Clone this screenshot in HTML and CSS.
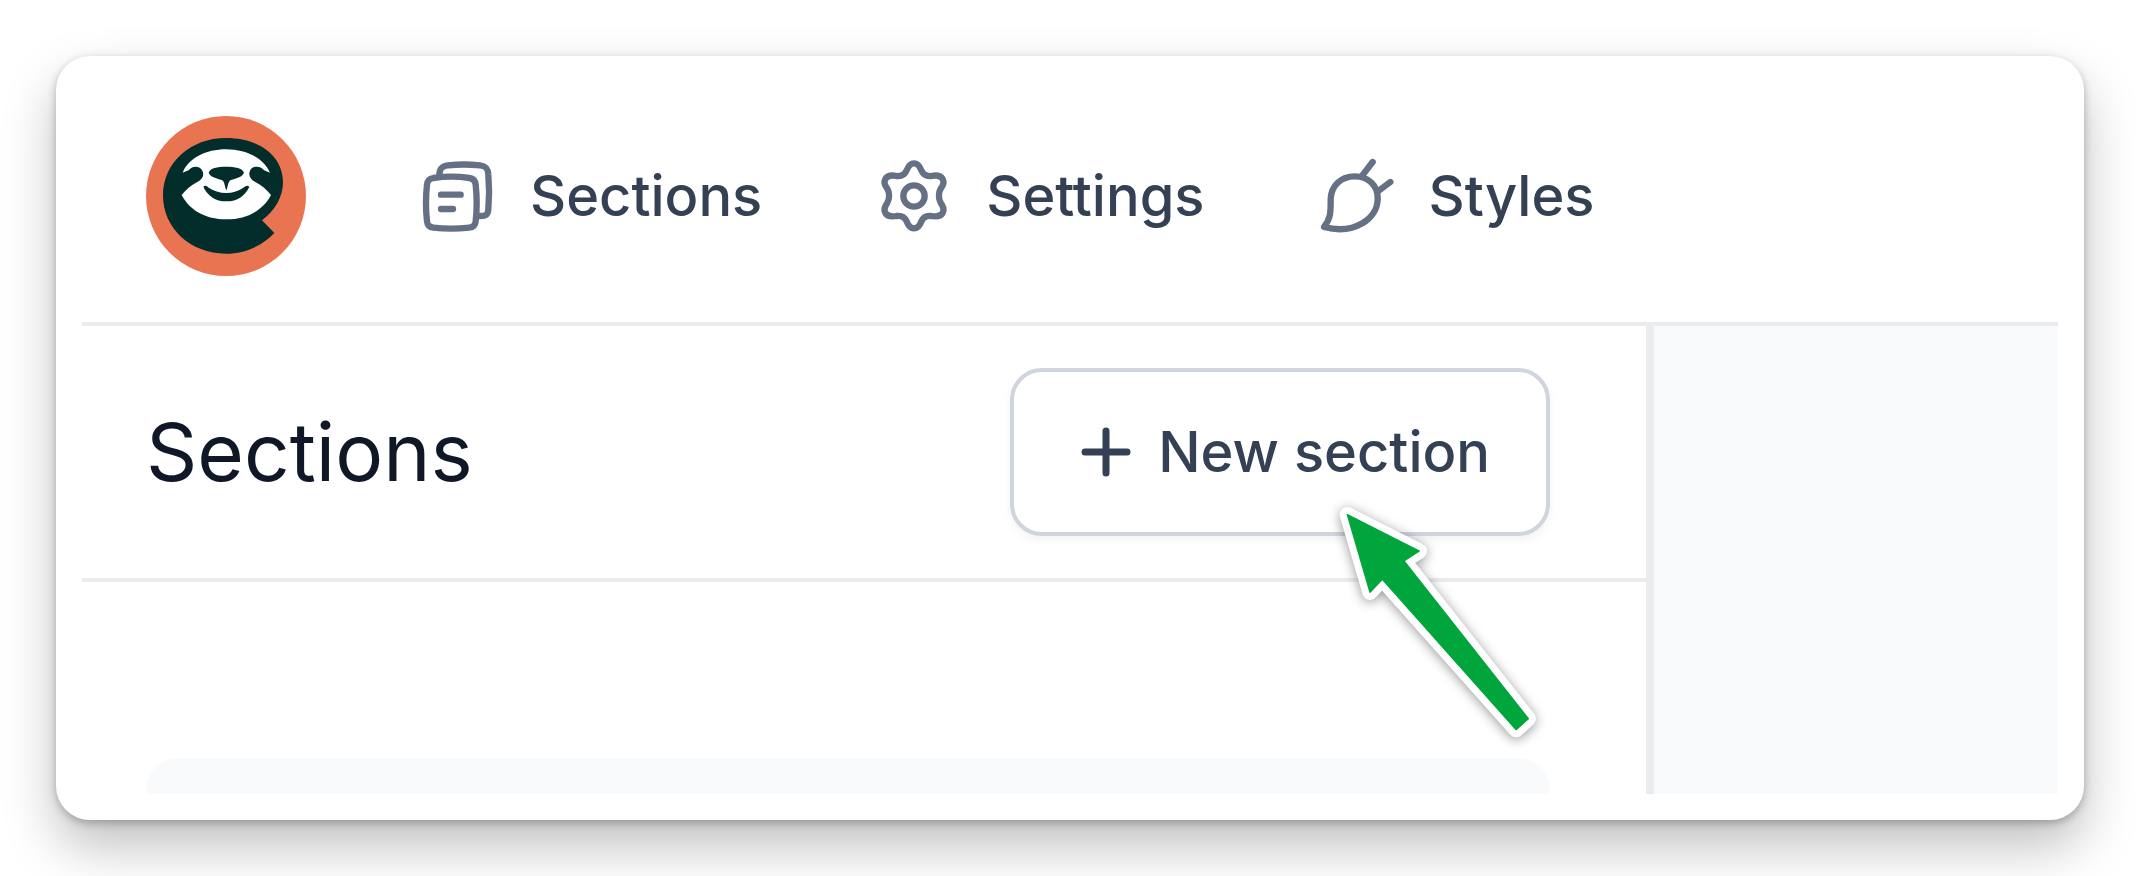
FILE: index.html
```html
<!DOCTYPE html>
<html lang="en">
<head>
  <meta charset="UTF-8" />
  <meta name="viewport" content="width=device-width, initial-scale=1.0" />
  <title>Sections</title>
  <link rel="stylesheet" href="styles.css">
</head>
<body>
  <main class="window">
    <header class="topbar">
      <a class="logo" href="#" aria-label="Home">
        <svg viewBox="48 48 480 480" aria-hidden="true">
          <circle cx="288" cy="288" r="240" fill="#e97451" />
          <path fill="#032d2a" d="M288 114C392 114 459 172 459 246C459 292 434 332 396 361L433 399C396 438 345 461 288 461C180 461 99 384 99 286C99 188 182 114 288 114Z" />
          <path fill="#fff" d="M288 148C348 148 402 174 420 218C410 214 404 213 398 207C388 197 366 198 360 212C354 226 361 238 376 246C396 257 410 269 423 285C400 330 352 358 288 358C226 358 178 330 155 285C168 269 182 257 202 246C217 238 224 226 217 212C211 198 190 197 180 207C174 213 168 214 158 218C176 174 228 148 288 148Z" />
          <path fill="#032d2a" d="M236 218C240 204 262 200 288 200C314 200 338 204 342 218C336 234 312 235 301 241C293 247 294 262 289 271C284 262 285 247 277 241C266 235 242 234 236 218Z" />
          <path fill="#032d2a" d="M220 260C224 256 230 257 234 262C266 285 312 285 342 262C347 257 353 256 358 260C346 287 322 304 289 304C256 304 232 287 220 260Z" />
        </svg>
      </a>
      <nav class="menu">
        <a class="menu-item" href="#">
          <svg class="icon" viewBox="54 48 240 240" aria-hidden="true">
            <path d="M118 106C118 86 126 78 144 76C172 73 212 73 240 76C258 78 264 86 265 104C268 138 268 174 265 208C264 224 258 228 240 228" />
            <path d="M100 114C134 109 174 109 208 114C220 116 226 122 227 134C231 170 231 208 227 244C226 256 220 262 208 263C172 267 134 267 100 263C88 262 82 256 81 244C77 208 77 170 81 134C82 122 88 116 100 114Z" />
            <path d="M123 164H182M123 207H159" />
          </svg>
          <span>Sections</span>
        </a>
        <a class="menu-item" href="#">
          <svg class="icon" viewBox="42 48 240 240" aria-hidden="true">
            <path d="M162 70C174 70 179 78 184 91C190 105 199 110 214 108C232 104 242 107 248 117C254 128 250 136 242 146C235 158 235 176 242 188C250 200 254 208 248 219C242 229 232 231 214 228C199 226 190 231 184 244C179 258 174 265 162 265C150 265 145 258 140 244C134 231 125 226 110 228C92 231 82 229 76 219C70 208 74 200 82 188C89 176 89 158 82 146C74 136 70 128 76 117C82 107 92 104 110 108C125 110 134 105 140 91C145 78 150 70 162 70Z" />
            <circle cx="162" cy="168" r="32" />
          </svg>
          <span>Settings</span>
        </a>
        <a class="menu-item" href="#">
          <svg class="icon" viewBox="54 48 240 240" aria-hidden="true">
            <path d="M75 261C96 235 95 216 95 178C96 137 126 109 167 109C208 109 238 137 236 178C235 234 168 286 75 261Z" />
            <path d="M190 106L221 66M238 153L274 126" />
          </svg>
          <span>Styles</span>
        </a>
      </nav>
    </header>

    <div class="workspace">
      <section class="panel">
        <div class="panel-header">
          <h1>Sections</h1>
          <div class="new-section">
            <button type="button" class="btn">
              <svg class="plus" viewBox="0 0 72 72" aria-hidden="true">
                <path d="M36 15V57M15 36H57" />
              </svg>
              <span>New section</span>
            </button>
            <svg class="pointer" viewBox="0 0 840 840" aria-hidden="true">
              <path class="outline" d="M142 104L358 213L312 243L685 716L648 749L247 298L210 337Z" />
              <path class="fill" d="M142 104L358 213L312 243L685 716L648 749L247 298L210 337Z" />
            </svg>
          </div>
        </div>
        <div class="panel-body">
          <div class="section-card"></div>
        </div>
      </section>
      <aside class="preview"></aside>
    </div>
  </main>
</body>
</html>
```
FILE: styles.css
```css
* {
  box-sizing: border-box;
}
body {
  margin: 0;
  padding: 56px;
  background-color: #fff;
  color: #344054;
  font-family: Inter, sans-serif;
}
.window {
  padding: 26px;
  background-color: #fff;
  border-radius: 34px;
  box-shadow: 0 3px 8px rgba(0,0,0,0.25), 0 26px 52px rgba(0,0,0,0.25);
}

/* top navigation */
.topbar {
  display: flex;
  align-items: center;
  gap: 112px;
  padding: 34px 64px 46px;
  border-bottom: 4px solid #eaecf0;
}
.logo {
  width: 160px;
  height: 160px;
}
.logo svg {
  display: block;
}
.menu {
  display: flex;
  gap: 112px;
}
.menu-item {
  display: flex;
  align-items: center;
  gap: 32px;
  color: #344054;
  font-size: 56px;
  font-weight: 500;
  line-height: 80px;
  text-decoration: none;
}
.icon {
  width: 80px;
  height: 80px;
  fill: none;
  stroke: #667085;
  stroke-width: 19;
  stroke-linecap: round;
  stroke-linejoin: round;
}

/* workspace */
.workspace {
  display: flex;
}
.panel {
  flex: 1;
  border-right: 8px solid #eaecf0;
}
.panel-header {
  display: flex;
  align-items: center;
  justify-content: space-between;
  padding: 42px 96px 42px 64px;
  border-bottom: 4px solid #eaecf0;
}
h1 {
  margin: 0;
  color: #101828;
  font-size: 80px;
  font-weight: 400;
  line-height: 120px;
}
.new-section {
  position: relative;
}
.btn {
  display: flex;
  align-items: center;
  gap: 16px;
  padding: 40px 56px;
  background-color: #fff;
  border: 4px solid #d0d5dd;
  border-radius: 32px;
  box-shadow: 0 4px 8px rgba(16,24,40,0.05);
  color: #344054;
  font-family: inherit;
  font-size: 56px;
  font-weight: 500;
  line-height: 80px;
  cursor: pointer;
}
.plus {
  width: 72px;
  height: 72px;
  fill: none;
  stroke: #344054;
  stroke-width: 7;
  stroke-linecap: round;
}
.pointer {
  position: absolute;
  top: 112px;
  left: 290px;
  z-index: 1;
  width: 280px;
  height: 280px;
  filter: drop-shadow(0 2px 6px rgba(0,0,0,0.4));
  pointer-events: none;
}
.pointer path {
  stroke-linejoin: round;
}
.pointer .outline {
  fill: #fff;
  stroke: #fff;
  stroke-width: 46;
}
.pointer .fill {
  fill: #00a53c;
  stroke: #00a53c;
  stroke-width: 4;
}
.panel-body {
  padding: 176px 96px 0 64px;
}
.section-card {
  height: 36px;
  background-color: #f9fafb;
  border-radius: 32px 32px 0 0;
}
.preview {
  width: 404px;
  background-color: #f9fafb;
}
```
